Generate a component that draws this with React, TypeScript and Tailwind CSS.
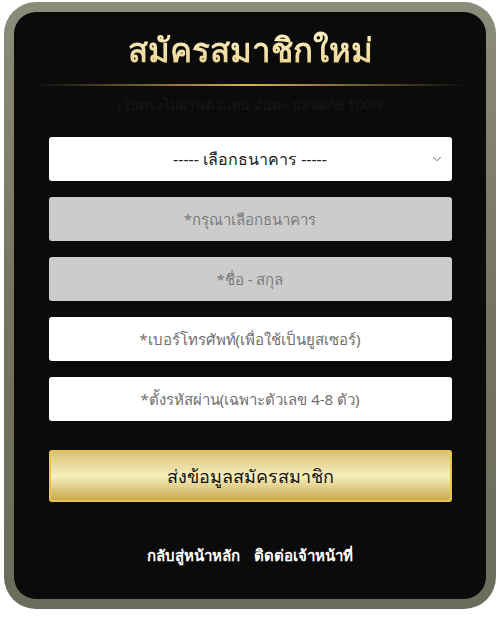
import React from 'react';
import { ChevronDown } from 'lucide-react';

const fields = [
    { placeholder: '*กรุณาเลือกธนาคาร', disabled: true },
    { placeholder: '*ชื่อ - สกุล', disabled: true },
    { placeholder: '*เบอร์โทรศัพท์(เพื่อใช้เป็นยูสเซอร์)', disabled: false },
    { placeholder: '*ตั้งรหัสผ่าน(เฉพาะตัวเลข 4-8 ตัว)', disabled: false },
];

export default function App() {
    return (
        <div className="w-[500px] h-[617px] bg-white pt-[2px] px-[4px] font-['Noto_Sans',sans-serif]">
            <div className="h-[607px] rounded-[32px] p-[10px] bg-gradient-to-b from-[#8c8c7a] via-[#74745f] to-[#6c6c5c]">
                <div className="h-full rounded-[22px] bg-[#0b0b0b] flex flex-col items-center pt-[16px]">
                    <h1 className="text-[33px] leading-[44px] font-bold bg-gradient-to-b from-[#fff3c8] to-[#e8cf8a] bg-clip-text text-transparent">
                        สมัครสมาชิกใหม่
                    </h1>
                    <div className="mt-[12px] w-[432px] h-[2px] bg-gradient-to-r from-transparent via-[#d6b25a] to-transparent" />
                    <p className="mt-[9px] text-[14px] leading-[20px] text-[#181818]">
                        เว็บตรงไม่ผ่านตัวแทน มั่นคง ปลอดภัย 100%
                    </p>

                    <form className="mt-[22px] w-[403px] flex flex-col gap-[16px]">
                        <div className="relative h-[44px] bg-white rounded-[3px] flex items-center justify-center">
                            <span className="text-[16px] text-[#222]">----- เลือกธนาคาร -----</span>
                            <ChevronDown size={14} strokeWidth={1.5} className="absolute right-[8px] text-[#555]" />
                        </div>
                        {fields.map(f => (
                            <input
                                key={f.placeholder}
                                type="text"
                                disabled={f.disabled}
                                placeholder={f.placeholder}
                                className={`h-[44px] rounded-[3px] text-center text-[15px] outline-none ${
                                    f.disabled
                                        ? 'bg-[#cccccc] placeholder:text-[#7a7a7a]'
                                        : 'bg-white placeholder:text-[#6f6f6f]'
                                }`}
                            />
                        ))}
                        <button
                            type="button"
                            className="mt-[13px] h-[52px] rounded-[3px] border-2 border-[#e6c64c] bg-gradient-to-b from-[#d9c278] via-[#f7efbd] to-[#c9a94a] text-[18px] text-[#111]"
                        >
                            ส่งข้อมูลสมัครสมาชิก
                        </button>
                    </form>

                    <div className="mt-[42px] flex gap-[14px] text-[15px] font-bold text-white">
                        <a>กลับสู่หน้าหลัก</a>
                        <a>ติดต่อเจ้าหน้าที่</a>
                    </div>
                </div>
            </div>
        </div>
    );
}
